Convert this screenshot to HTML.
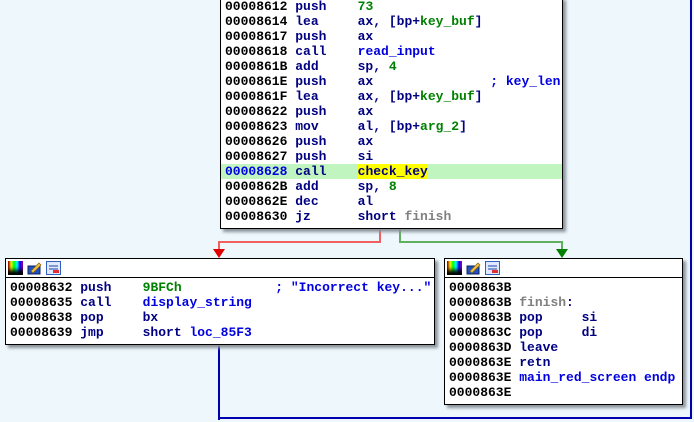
<!DOCTYPE html>
<html><head><style>
body{margin:0;width:694px;height:422px;background:#eef7fc;position:relative;overflow:hidden;font-family:"Liberation Mono",monospace;font-size:13px;font-weight:bold}
.box{position:absolute;background:#fff;border:1px solid #000;box-shadow:3px 3px 3px #8a9299}
.l{position:absolute;left:4px;white-space:pre;line-height:15px;height:15px;color:#000080}
.a{color:#000}
.g{color:#008000}
.b{color:#0000e0}
.gr{color:#808080}
.bar{position:absolute;left:0;right:0;top:0;height:18px;border-bottom:1px solid #000}
.ic{position:absolute;top:2px;width:15px;height:14px}
.ln{position:absolute}
</style></head><body>
<div class="ln" style="left:379px;top:228px;width:2px;height:14px;background:#f06060"></div>
<div class="ln" style="left:218px;top:241px;width:163px;height:2px;background:#f06060"></div>
<div class="ln" style="left:218px;top:241px;width:2px;height:10px;background:#f06060"></div>
<div class="ln" style="left:213px;top:249px;width:0;height:0;border-left:6px solid transparent;border-right:6px solid transparent;border-top:9px solid #e00000"></div>
<div class="ln" style="left:399px;top:228px;width:2px;height:14px;background:#60b060"></div>
<div class="ln" style="left:399px;top:241px;width:164px;height:2px;background:#60b060"></div>
<div class="ln" style="left:561px;top:241px;width:2px;height:10px;background:#60b060"></div>
<div class="ln" style="left:556px;top:249px;width:0;height:0;border-left:6px solid transparent;border-right:6px solid transparent;border-top:9px solid #008000"></div>
<div class="ln" style="left:218px;top:343px;width:2px;height:77px;background:#0000b0"></div>
<div class="ln" style="left:218px;top:417px;width:474px;height:2px;background:#0000b0"></div>
<div class="ln" style="left:690px;top:0;width:2px;height:419px;background:#0000b0"></div>

<div class="box" style="left:220px;top:-3px;width:341px;height:230px">
<div class="l" style="top:1px"><span class="a">00008612</span> push    <span class="g">73</span></div>
<div class="l" style="top:16px"><span class="a">00008614</span> lea     ax, [bp+<span class="g">key_buf</span>]</div>
<div class="l" style="top:31px"><span class="a">00008617</span> push    ax</div>
<div class="l" style="top:46px"><span class="a">00008618</span> call    <span class="b">read_input</span></div>
<div class="l" style="top:61px"><span class="a">0000861B</span> add     sp, <span class="g">4</span></div>
<div class="l" style="top:76px"><span class="a">0000861E</span> push    ax               <span class="b">; key_len</span></div>
<div class="l" style="top:91px"><span class="a">0000861F</span> lea     ax, [bp+<span class="g">key_buf</span>]</div>
<div class="l" style="top:106px"><span class="a">00008622</span> push    ax</div>
<div class="l" style="top:121px"><span class="a">00008623</span> mov     al, [bp+<span class="g">arg_2</span>]</div>
<div class="l" style="top:136px"><span class="a">00008626</span> push    ax</div>
<div class="l" style="top:151px"><span class="a">00008627</span> push    si</div>
<div class="l" style="top:166px;left:0;right:0;padding-left:4px;background:#c0f5c0"><span class="b">00008628</span> call    <span style="background:#ffff00">check_key</span></div>
<div class="l" style="top:181px"><span class="a">0000862B</span> add     sp, <span class="g">8</span></div>
<div class="l" style="top:196px"><span class="a">0000862E</span> dec     al</div>
<div class="l" style="top:211px"><span class="a">00008630</span> jz      short <span class="gr">finish</span></div>
</div>

<div class="box" style="left:5px;top:258px;width:428px;height:85px">
<div class="bar"><div class="ic" style="left:2px;background:linear-gradient(90deg,#f00,#ff0,#0f0,#0ff,#00f,#f0f);box-shadow:inset 0 -5px 4px #000"></div><svg class="ic" style="left:21px" viewBox="0 0 15 14"><rect x="1" y="5" width="12" height="8" fill="#2050c0" stroke="#102060"/><path d="M4 10 L12 2 L14 4 L6 12 Z" fill="#f0c040" stroke="#806010" stroke-width=".7"/></svg><svg class="ic" style="left:40px" viewBox="0 0 15 14"><rect x="0.5" y="0.5" width="14" height="13" fill="#e0e8ff" stroke="#3060c0"/><path d="M3 5h9M3 8h9" stroke="#2040a0"/><rect x="7" y="9" width="6" height="3" fill="#e03030"/></svg></div>
<div class="l" style="top:21px"><span class="a">00008632</span> push    <span class="g">9BFCh</span>            <span class="b">; "Incorrect key..."</span></div>
<div class="l" style="top:36px"><span class="a">00008635</span> call    <span class="b">display_string</span></div>
<div class="l" style="top:51px"><span class="a">00008638</span> pop     bx</div>
<div class="l" style="top:66px"><span class="a">00008639</span> jmp     short <span class="b">loc_85F3</span></div>
</div>

<div class="box" style="left:444px;top:258px;width:237px;height:145px">
<div class="bar"><div class="ic" style="left:2px;background:linear-gradient(90deg,#f00,#ff0,#0f0,#0ff,#00f,#f0f);box-shadow:inset 0 -5px 4px #000"></div><svg class="ic" style="left:21px" viewBox="0 0 15 14"><rect x="1" y="5" width="12" height="8" fill="#2050c0" stroke="#102060"/><path d="M4 10 L12 2 L14 4 L6 12 Z" fill="#f0c040" stroke="#806010" stroke-width=".7"/></svg><svg class="ic" style="left:40px" viewBox="0 0 15 14"><rect x="0.5" y="0.5" width="14" height="13" fill="#e0e8ff" stroke="#3060c0"/><path d="M3 5h9M3 8h9" stroke="#2040a0"/><rect x="7" y="9" width="6" height="3" fill="#e03030"/></svg></div>
<div class="l" style="top:21px"><span class="a">0000863B</span></div>
<div class="l" style="top:36px"><span class="a">0000863B</span> <span class="gr">finish</span>:</div>
<div class="l" style="top:51px"><span class="a">0000863B</span> pop     si</div>
<div class="l" style="top:66px"><span class="a">0000863C</span> pop     di</div>
<div class="l" style="top:81px"><span class="a">0000863D</span> leave</div>
<div class="l" style="top:96px"><span class="a">0000863E</span> retn</div>
<div class="l" style="top:111px"><span class="a">0000863E</span> <span class="b">main_red_screen endp</span></div>
<div class="l" style="top:126px"><span class="a">0000863E</span></div>
</div>
</body></html>
